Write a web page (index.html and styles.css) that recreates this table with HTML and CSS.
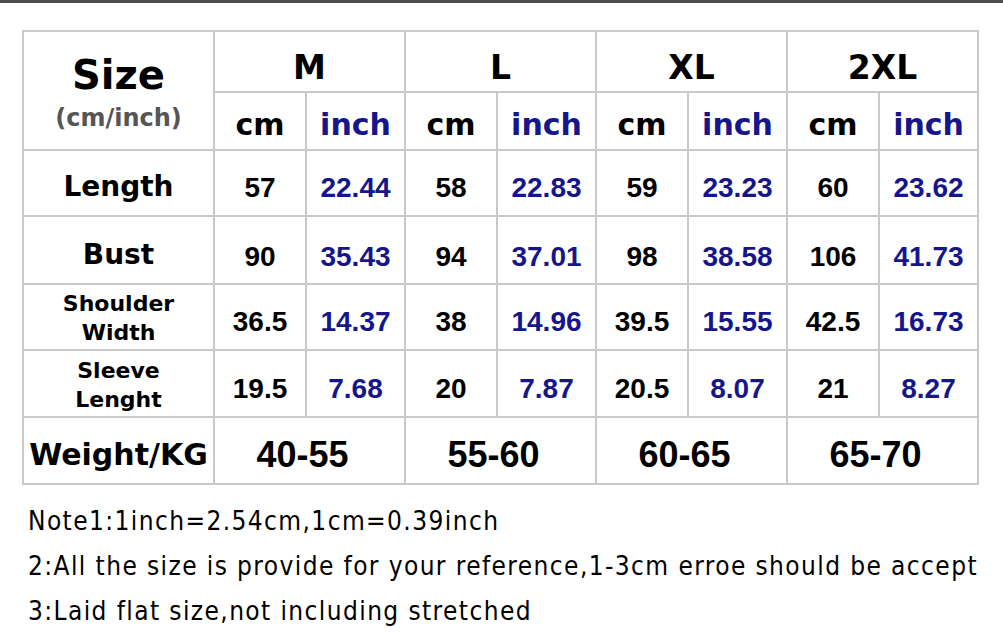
FILE: index.html
```html
<!DOCTYPE html>
<html>
<head>
<meta charset="utf-8">
<link rel="stylesheet" href="styles.css">
</head>
<body>
<div class="topbar"></div>
<main class="page">
  <table class="chart">
    <colgroup>
      <col class="c-label">
      <col class="c-cm"><col class="c-in">
      <col class="c-cm"><col class="c-in">
      <col class="c-cm"><col class="c-in">
      <col class="c-cm"><col class="c-in">
    </colgroup>
    <tr class="r-size">
      <th rowspan="2" class="size-head"><div class="size-title">Size</div><div class="size-sub">(cm/inch)</div></th>
      <th colspan="2" class="size-name">M</th>
      <th colspan="2" class="size-name">L</th>
      <th colspan="2" class="size-name">XL</th>
      <th colspan="2" class="size-name">2XL</th>
    </tr>
    <tr class="r-unit">
      <th class="unit">cm</th><th class="unit inch">inch</th>
      <th class="unit">cm</th><th class="unit inch">inch</th>
      <th class="unit">cm</th><th class="unit inch">inch</th>
      <th class="unit">cm</th><th class="unit inch">inch</th>
    </tr>
    <tr class="r-length">
      <th class="label">Length</th>
      <td>57</td><td class="in">22.44</td>
      <td>58</td><td class="in">22.83</td>
      <td>59</td><td class="in">23.23</td>
      <td>60</td><td class="in">23.62</td>
    </tr>
    <tr class="r-bust">
      <th class="label">Bust</th>
      <td>90</td><td class="in">35.43</td>
      <td>94</td><td class="in">37.01</td>
      <td>98</td><td class="in">38.58</td>
      <td>106</td><td class="in">41.73</td>
    </tr>
    <tr class="r-shoulder">
      <th class="label small">Shoulder<br>Width</th>
      <td>36.5</td><td class="in">14.37</td>
      <td>38</td><td class="in">14.96</td>
      <td>39.5</td><td class="in">15.55</td>
      <td>42.5</td><td class="in">16.73</td>
    </tr>
    <tr class="r-sleeve">
      <th class="label small">Sleeve<br>Lenght</th>
      <td>19.5</td><td class="in">7.68</td>
      <td>20</td><td class="in">7.87</td>
      <td>20.5</td><td class="in">8.07</td>
      <td>21</td><td class="in">8.27</td>
    </tr>
    <tr class="r-weight">
      <th class="label weight">Weight/KG</th>
      <td colspan="2" class="wt">40-55</td>
      <td colspan="2" class="wt">55-60</td>
      <td colspan="2" class="wt">60-65</td>
      <td colspan="2" class="wt">65-70</td>
    </tr>
  </table>
  <div class="notes">
    <p>Note1:1inch=2.54cm,1cm=0.39inch</p>
    <p>2:All the size is provide for your reference,1-3cm erroe should be accept</p>
    <p>3:Laid flat size,not including stretched</p>
  </div>
</main>
</body>
</html>
```

FILE: styles.css
```css
html, body {
  margin: 0;
  padding: 0;
  background: #ffffff;
}
body {
  width: 1003px;
  height: 636px;
  overflow: hidden;
  font-family: "DejaVu Sans", sans-serif;
  color: #000;
}
.topbar {
  height: 3px;
  background: #4d4d4d;
}
.page {
  padding: 27px 0 0 22px;
}
.chart {
  border-collapse: collapse;
  table-layout: fixed;
  width: 955px;
  border: 2px solid #c6c6c6;
}
.chart th, .chart td {
  border: 2px solid #c9c9c9;
  padding: 0;
  text-align: center;
  vertical-align: middle;
}
.c-label { width: 191px; }
.c-cm { width: 92px; }
.c-in { width: 99px; }

.r-size { height: 61px; }
.r-unit { height: 58px; }
.r-length { height: 66px; }
.r-bust { height: 68px; }
.r-shoulder { height: 66px; }
.r-sleeve { height: 67px; }
.r-weight { height: 67px; }

.size-title {
  font-weight: bold;
  font-size: 40px;
  line-height: 42px;
  margin-top: 6px;
}
.size-sub {
  font-weight: bold;
  font-size: 24px;
  line-height: 30px;
  margin-top: 7px;
  color: #555;
}
.chart .size-name {
  font-weight: bold;
  font-size: 33px;
  padding-top: 12px;
}
.chart .unit {
  font-weight: bold;
  font-size: 30px;
  padding-top: 6px;
}
.chart .unit.inch { color: #16168c; }
.chart .label {
  font-weight: bold;
  font-size: 28px;
  line-height: 32px;
  padding-top: 8px;
}
.chart .r-bust .label { padding-top: 10px; }
.chart .label.small {
  font-size: 22px;
  line-height: 29px;
  padding-top: 2px;
}
.chart .label.weight {
  font-size: 30px;
  padding-top: 8px;
}
.chart td {
  font-family: "Liberation Sans", sans-serif;
  font-weight: bold;
  font-size: 28px;
  padding-top: 10px;
}
.chart .r-bust td { padding-top: 14px; }
.chart td.in { color: #16168c; }
.chart td.wt {
  font-size: 36px;
  padding-top: 8px;
  padding-right: 14px;
}
.notes {
  padding: 14px 0 0 6px;
  font-family: "DejaVu Sans Condensed", "DejaVu Sans", sans-serif;
  font-size: 26px;
  letter-spacing: 1.4px;
  color: #000;
}
.notes p {
  margin: 0;
  line-height: 45px;
}
```
